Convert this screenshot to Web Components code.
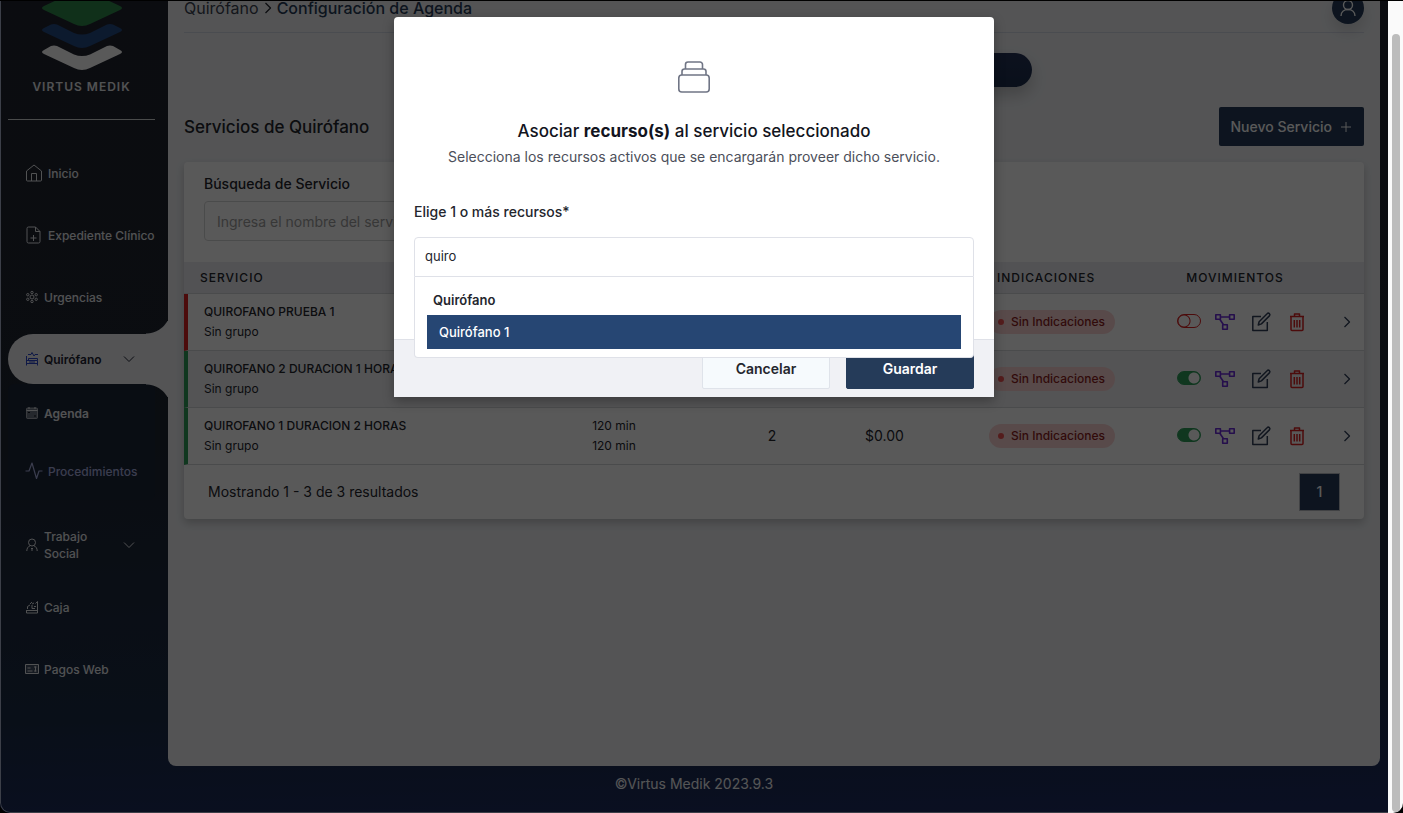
<!DOCTYPE html>
<html lang="es">
<head>
<meta charset="utf-8">
<meta name="viewport" content="width=device-width, initial-scale=1">
<title>Virtus Medik - Configuración de Agenda</title>
<style>
  html, body {
    margin: 0;
    height: 100%;
    background: #000;
  }

  body {
    font-family: Inter, "Liberation Sans", sans-serif;
    font-size: 14px;
    line-height: 20px;
    color: #24262d;
    overflow: hidden;
  }
</style>
</head>
<body>
<vm-window>
  <vm-page>
    <vm-sidebar slot="sidebar">
      <vm-nav-item icon="home" size="18">Inicio</vm-nav-item>
      <vm-nav-item icon="file" size="18">Expediente Clínico</vm-nav-item>
      <vm-nav-item icon="virus">Urgencias</vm-nav-item>
      <vm-nav-item icon="bed" active expandable>Quirófano</vm-nav-item>
      <vm-submenu>
        <vm-nav-item icon="calendar" sub strong>Agenda</vm-nav-item>
        <vm-nav-item icon="pulse" size="18" sub muted>Procedimientos</vm-nav-item>
      </vm-submenu>
      <vm-nav-item icon="person" expandable>Trabajo Social</vm-nav-item>
      <vm-nav-item icon="cash">Caja</vm-nav-item>
      <vm-nav-item icon="card" size="14">Pagos Web</vm-nav-item>
    </vm-sidebar>
    <vm-topbar section="Quirófano" current="Configuración de Agenda"></vm-topbar>
    <vm-tabs></vm-tabs>
    <vm-services></vm-services>
    <span slot="footer">©Virtus Medik 2023.9.3</span>
  </vm-page>
  <vm-modal slot="modal">
    <vm-icon slot="icon" name="archive" size="32"></vm-icon>
    <span slot="title">Asociar <b>recurso(s)</b> al servicio seleccionado</span>
    <span slot="subtitle">Selecciona los recursos activos que se encargarán proveer dicho servicio.</span>
    <vm-multiselect label="Elige 1 o más recursos*" value="quiro" group="Quirófano" option="Quirófano 1"></vm-multiselect>
  </vm-modal>
</vm-window>

<script>
  const ICONS = {
    home: { box: "0 0 18 18", w: 1, d: '<path d="M1.500 7 9 1l7.500 6v9a1 1 0 0 1-1 1h-13a1 1 0 0 1-1-1zM6.500 17v-7.500h5V17"/>' },
    file: { box: "0 0 18 18", w: 1, d: '<path d="M10.500 1H3.500a1.500 1.500 0 0 0-1.500 1.500v13A1.500 1.500 0 0 0 3.500 17h10a1.500 1.500 0 0 0 1.500-1.500V5.500zM10.500 1v4.500H15M8.500 9v6M5.500 12h6"/>' },
    virus: { box: "0 0 12 12", w: 1, d: '<circle cx="6" cy="6" r="2"/><circle cx="6" cy="1.500" r="1.200"/><circle cx="6" cy="10.500" r="1.200"/><circle cx="1.800" cy="3.700" r="1.200"/><circle cx="10.200" cy="3.700" r="1.200"/><circle cx="1.800" cy="8.300" r="1.200"/><circle cx="10.200" cy="8.300" r="1.200"/>' },
    bed: { box: "0 1 12 12", w: 1, d: '<path d="M2 2.500h3l1-2 2 3.500 1-1.500h3M.500 4v9.500M.500 8.500h11v5M.500 11.500h11M2.500 8.500v-2h9v2M3 10h6"/>' },
    calendar: { box: "0 0 12 12", w: 1, d: '<rect x=".5" y="1" width="11" height="10.500" rx="1" fill="currentColor" fill-opacity=".4" stroke-opacity=".6"/><path d="M3 0v2M9 0v2M.500 3.500h11"/><path d="M2 5.500h2M8 9h2" stroke="#10141f"/>' },
    pulse: { box: "0 0 18 18", w: 1.2, d: '<path d="M.500 9H4l3-8 4.500 15.500L14 9h3.500"/>' },
    person: { box: "0 1 12 12", w: 1, d: '<circle cx="6" cy="4.500" r="3.500"/><path d="M.800 13c0-2.500 1.200-4.500 3.200-5.200M11.200 13c0-2.500-1.200-4.500-3.200-5.200M6 10v3M5 10.500h2"/>' },
    cash: { box: "0 1 12 12", w: 1, d: '<path d="M.500 10v3h11V1.500l-2 2M.500 10.500h11M1.500 9V6.500L4 5M4 4l2-2M6 4l2-1M6 5v3.500h3M8 6.500h2"/>' },
    card: { box: "0 0 14 12", w: 1, d: '<rect x=".5" y="1.500" width="13" height="9" fill="currentColor" fill-opacity=".18"/><path d="M2.500 5h3M2.500 8h5M9 4h2.500M9 8h2.500M10.500 3.500v5"/>' },
    chevronDown: { box: "0 0 12 12", w: 1, d: '<path d="M1 3.500 6 8.500l5-5"/>' },
    chevronRight: { box: "0 0 12 12", w: 1.3, d: '<path d="M3.500 1 8.500 6l-5 5"/>' },
    user: { box: "0 0 18 18", w: 1.4, d: '<circle cx="9" cy="6" r="4.500"/><path d="M2 17c0-4 3-6.500 7-6.500s7 2.500 7 6.500"/>' },
    plus: { box: "0 0 12 12", w: 1, d: '<path d="M6 1v10M1 6h10"/>' },
    diagram: { box: "0 0 20 20", w: 1.6, d: '<rect x=".8" y="2.700" width="4.600" height="4.600"/><rect x="14.600" y="2.700" width="4.600" height="4.600"/><rect x="7.700" y="12.700" width="4.600" height="4.600"/><path d="M5.400 5h9.200M4.800 7.300l3.700 5.400"/>' },
    edit: { box: "0 0 20 20", w: 1.5, d: '<path d="M10 4.500H1.800v14h14.500V10"/><path d="m7.300 13 .8-3.300 8-8a1.500 1.500 0 0 1 2.300 2.200l-8 8z"/>' },
    trash: { box: "0 0 20 20", w: 1.5, d: '<path d="M3 4.500h14M7.500 4.500V2h5v2.500M4 4.500v13a1 1 0 0 0 1 1h10a1 1 0 0 0 1-1v-13M7.300 8v7.500M10 8v7.500M12.700 8v7.500"/>' },
    archive: { box: "0 0 32 32", w: 1.6, d: '<rect x=".8" y="14" width="30.400" height="17" rx="3"/><path d="M4 14v-3.500A2.500 2.500 0 0 1 6.500 8h19a2.500 2.500 0 0 1 2.500 2.500V14M7.500 8V3.500A2.500 2.500 0 0 1 10 1h12a2.500 2.500 0 0 1 2.500 2.500V8"/>' },
  }

  const SERVICES = [
    { name: "QUIROFANO PRUEBA 1", group: "Sin grupo", active: false },
    { name: "QUIROFANO 2 DURACION 1 HORA", group: "Sin grupo", active: true },
    { name: "QUIROFANO 1 DURACION 2 HORAS", group: "Sin grupo", min: "120 min", max: "120 min", resources: "2", cost: "$0.00", active: true },
  ]

  class VmIcon extends HTMLElement {
    constructor() {
      super()
      this.attachShadow({ mode: "open" })
    }

    connectedCallback() {
      const icon = ICONS[this.getAttribute("name")]
      const size = this.getAttribute("size") || 12
      this.shadowRoot.innerHTML = `
        <style>
          :host { display: inline-flex; flex: none; }
          svg { display: block; width: ${size}px; height: ${size}px; overflow: visible; }
        </style>
        <svg viewBox="${icon.box}" fill="none" stroke="currentColor" stroke-width="${icon.w}"
          stroke-linejoin="round" aria-hidden="true">${icon.d}</svg>
      `
    }
  }

  class VmWindow extends HTMLElement {
    constructor() {
      super()
      this.attachShadow({ mode: "open" })
      this.shadowRoot.innerHTML = `
        <style>
          :host {
            display: flex;
            height: 100vh;
            box-sizing: border-box;
            border-top: 1px solid #000;
          }

          .view {
            position: relative;
            flex: 1;
            min-width: 0;
            overflow: hidden;
            border-radius: 0 0 0 10px;
          }

          .edge {
            position: absolute;
            inset: 0;
            border: solid #3c3f48;
            border-width: 0 0 1px 1px;
            border-radius: 0 0 0 10px;
            pointer-events: none;
          }

          .track {
            width: 15px;
            box-sizing: border-box;
            padding: 33px 3px 1px 4px;
            background: #fafafa;
            display: flex;
            border-radius: 0 0 10px 0;
          }

          .thumb {
            flex: 1;
            border-radius: 4px;
            background: #bcbcbc;
          }
        </style>
        <div class="view">
          <slot></slot>
          <slot name="modal"></slot>
          <div class="edge"></div>
        </div>
        <div class="track"><div class="thumb"></div></div>
      `
    }
  }

  class VmPage extends HTMLElement {
    constructor() {
      super()
      this.attachShadow({ mode: "open" })
      this.shadowRoot.innerHTML = `
        <style>
          :host {
            display: grid;
            grid-template-columns: 168px minmax(0, 1fr);
            grid-template-rows: minmax(0, 1fr) 47px;
            height: calc(100% + 17px);
            margin-top: -17px;
            padding-right: 8px;
            box-sizing: border-box;
            background: linear-gradient(178deg, #22242f 0%, #1f2531 50%, #1c2c46 84%, #1d2b64 100%);
          }

          main {
            background: #eff1f4;
            border-radius: 0 0 8px 8px;
            padding: 0 16px;
          }

          footer {
            grid-column: 1 / -1;
            margin-right: -8px;
            padding-top: 8px;
            text-align: center;
            color: #f4f5f7;
          }
        </style>
        <slot name="sidebar"></slot>
        <main><slot></slot></main>
        <footer><slot name="footer"></slot></footer>
      `
    }
  }

  class VmSidebar extends HTMLElement {
    constructor() {
      super()
      this.attachShadow({ mode: "open" })
      this.shadowRoot.innerHTML = `
        <style>
          :host {
            display: block;
            color: #e8eaee;
          }

          .brand {
            display: flex;
            flex-direction: column;
            align-items: center;
            gap: 8px;
            margin: 0 13px 28px 8px;
            padding-bottom: 23px;
            border-bottom: 1px solid #d5d6d7;
            font-size: 12px;
            line-height: 18px;
            font-weight: 600;
            letter-spacing: 1px;
          }

          nav {
            display: flex;
            flex-direction: column;
            gap: 12px;
            padding-left: 8px;
          }
        </style>
        <div class="brand">
          <svg width="80" height="86" viewBox="0 0 80 86" aria-hidden="true">
            <path d="M2 22 32 8q8-4 16 0l30 14q4 2 0 4L48 40q-8 4-16 0L2 26q-4-2 0-4z" fill="#2f8a4c"/>
            <path d="M2 44 9 40.500q3-1 6 0L32 49q8 3 16 0l17-8.500q3-1 6 0L78 44q4 2 0 4L48 62q-8 4-16 0L2 48q-4-2 0-4z" fill="#244a85"/>
            <path d="M2 66 9 62q3-1 6 0L32 70.500q8 3 16 0L65 62q3-1 6 0L78 66q4 2 0 4L48 84q-8 4-16 0L2 70q-4-2 0-4z" fill="#fff"/>
          </svg>
          VIRTUS MEDIK
        </div>
        <nav><slot></slot></nav>
      `
    }
  }

  class VmNavItem extends HTMLElement {
    constructor() {
      super()
      this.attachShadow({ mode: "open" })
    }

    connectedCallback() {
      this.shadowRoot.innerHTML = `
        <style>
          :host { display: block; position: relative; }

          a {
            display: flex;
            align-items: center;
            gap: 6px;
            height: 50px;
            padding: 0 28px 0 18px;
            box-sizing: border-box;
            color: inherit;
            text-decoration: none;
            font-size: 12px;
            line-height: 17px;
            font-weight: 500;
          }

          .label { flex: 1; }
          .arrow { margin-right: 3px; }

          :host([size="18"]) a { gap: 5px; padding-left: 17px; padding-right: 0; white-space: nowrap; }
          :host([size="14"]) a { gap: 5px; padding-left: 17px; }
          :host([expandable]) a { padding-right: 30px; }
          :host([sub]) a { height: 58px; }
          :host([strong]) a { font-weight: 600; }
          :host([muted]) a { color: #a9b0e0; }

          :host([active]) a {
            background: #eff1f4;
            border-radius: 25px 0 0 25px;
            color: #1f2433;
            font-weight: 600;
          }

          :host([active]) .icon { color: #2b46c8; }

          /* inverted corners joining the active item to the content */
          :host([active])::before,
          :host([active])::after {
            content: "";
            position: absolute;
            right: 0;
            width: 22px;
            height: 13px;
          }

          :host([active])::before {
            bottom: 100%;
            background: radial-gradient(circle at 0 -12px, transparent 24px, #eff1f4 25px);
          }

          :host([active])::after {
            top: 100%;
            background: radial-gradient(circle at 0 25px, transparent 24px, #eff1f4 25px);
          }
        </style>
        <a href="#">
          <vm-icon class="icon" name="${this.getAttribute("icon")}" size="${this.getAttribute("size") || 12}"></vm-icon>
          <span class="label"><slot></slot></span>
          ${this.hasAttribute("expandable") ? '<vm-icon class="arrow" name="chevronDown"></vm-icon>' : ""}
        </a>
      `
    }
  }

  class VmSubmenu extends HTMLElement {
    constructor() {
      super()
      this.attachShadow({ mode: "open" })
      this.shadowRoot.innerHTML = `
        <style>
          :host {
            display: block;
            margin: -12px 13px 8px 0;
            background: #1a2538;
            border-radius: 6px;
          }
        </style>
        <slot></slot>
      `
    }
  }

  class VmTopbar extends HTMLElement {
    constructor() {
      super()
      this.attachShadow({ mode: "open" })
    }

    connectedCallback() {
      this.shadowRoot.innerHTML = `
        <style>
          :host {
            display: flex;
            align-items: center;
            justify-content: space-between;
            height: 48px;
            border-bottom: 1px solid #d5d9e6;
            font-size: 16px;
          }

          nav { display: flex; align-items: center; gap: 3px; }
          a { color: #3a4150; text-decoration: none; }
          strong { font-weight: 500; color: #253a57; }

          button {
            display: flex;
            align-items: center;
            justify-content: center;
            width: 32px;
            height: 32px;
            padding: 0;
            border: 0;
            border-radius: 50%;
            background: #253b59;
            color: #fff;
            box-shadow: 0 8px 14px rgba(0, 0, 0, .12);
          }
        </style>
        <nav aria-label="Ruta">
          <a href="#">${this.getAttribute("section")}</a>
          <vm-icon name="chevronRight"></vm-icon>
          <strong>${this.getAttribute("current")}</strong>
        </nav>
        <button type="button" aria-label="Cuenta"><vm-icon name="user" size="18"></vm-icon></button>
      `
    }
  }

  class VmTabs extends HTMLElement {
    constructor() {
      super()
      this.attachShadow({ mode: "open" })
      this.shadowRoot.innerHTML = `
        <style>
          :host {
            display: block;
            width: 516px;
            height: 34px;
            margin: 20px auto;
            border-radius: 17px;
            background: linear-gradient(#253357, #1d2e4d);
            box-shadow: 0 8px 16px rgba(0, 0, 0, .2);
          }
        </style>
      `
    }
  }

  class VmServices extends HTMLElement {
    constructor() {
      super()
      this.attachShadow({ mode: "open" })
    }

    connectedCallback() {
      this.shadowRoot.innerHTML = `
        <style>
          :host { display: block; }

          .heading {
            display: flex;
            align-items: center;
            justify-content: space-between;
            margin-bottom: 16px;
          }

          h1 { margin: 0; font-size: 17px; line-height: 28px; font-weight: 500; }

          .new {
            display: flex;
            align-items: center;
            gap: 8px;
            height: 39px;
            padding: 0 12px;
            border: 0;
            border-radius: 2px;
            background: #253b59;
            color: #fff;
            font: 500 14px/20px Inter, sans-serif;
          }

          .card {
            background: #fff;
            border-radius: 4px;
            box-shadow: 0 4px 8px rgba(0, 0, 0, .2);
          }

          .search { padding: 12px 20px 21px; }
          .search label { display: block; margin-bottom: 7px; font-weight: 500; }

          .search input {
            display: block;
            width: 50%;
            height: 40px;
            box-sizing: border-box;
            padding: 0 12px;
            border: 1px solid #d5d6d7;
            border-radius: 4px;
            background: #fff;
            font: 400 14px/20px Inter, sans-serif;
          }

          .search input::placeholder { color: #9e9e9e; }

          table {
            width: 100%;
            table-layout: fixed;
            border-collapse: separate;
            border-spacing: 0;
          }

          th, td { padding: 0; text-align: center; }

          th {
            height: 31px;
            border-bottom: 1px solid #d5d6da;
            background: #eaebef;
            font-size: 12px;
            line-height: 20px;
            font-weight: 500;
            letter-spacing: 1px;
          }

          th:first-child { padding-left: 16px; text-align: left; }
          th:nth-child(5) { padding-left: 24px; text-align: left; }

          td {
            height: 56px;
            border-bottom: 1px solid #d5d6da;
            font-size: 12px;
          }

          tr:nth-child(even) td { background: #f0f1f4; }

          td:first-child {
            padding-left: 16px;
            border-left: 4px solid #2f9e5b;
            text-align: left;
          }

          tr.off td:first-child { border-left-color: #d92020; }
          td:first-child b { display: block; font-weight: 500; }
          td:nth-child(3) { font-size: 14px; }
          td:nth-child(4) { padding-left: 16px; text-align: left; font-size: 14px; }
          td:nth-child(5) { padding-left: 16px; text-align: left; }
          td:last-child { padding-right: 11px; }

          .badge {
            display: inline-flex;
            align-items: center;
            gap: 7px;
            height: 24px;
            padding: 0 10px 0 9px;
            border-radius: 12px;
            background: #fbd5d5;
            color: #8f1d1d;
            font-weight: 500;
          }

          .badge::before {
            content: "";
            width: 6px;
            height: 6px;
            border-radius: 50%;
            background: #f05252;
          }

          .actions {
            display: flex;
            align-items: center;
            padding-left: 16px;
          }

          .actions input {
            appearance: none;
            width: 24px;
            height: 14px;
            margin: 0 14px 2px 0;
            box-sizing: border-box;
            border: 1px solid #d92020;
            border-radius: 7px;
            background: radial-gradient(circle at 6px 6px, transparent 5px, #d92020 6px, transparent 7px);
          }

          .actions input:checked {
            border-color: #2f9e5b;
            background: radial-gradient(circle at 16px 6px, #fff 5px, #2f9e5b 6px);
          }

          .actions button, td:last-child button {
            display: flex;
            padding: 0;
            border: 0;
            background: none;
            color: #33415a;
          }

          td:last-child button { margin-left: auto; }
          .actions button + button { margin-left: 16px; }
          .actions .flow { color: #6c2bd9; }
          .actions .remove { color: #d92020; }

          .summary {
            display: flex;
            align-items: center;
            justify-content: space-between;
            height: 54px;
            padding: 0 24px;
          }

          .summary button {
            width: 41px;
            height: 38px;
            padding: 0;
            border: 1px solid #b9bcc4;
            background: #253b59;
            color: #fff;
            font: 500 14px/20px Inter, sans-serif;
          }
        </style>
        <div class="heading">
          <h1>Servicios de Quirófano</h1>
          <button type="button" class="new">Nuevo Servicio <vm-icon name="plus"></vm-icon></button>
        </div>
        <section class="card">
          <div class="search">
            <label for="query">Búsqueda de Servicio</label>
            <input id="query" type="search" placeholder="Ingresa el nombre del servicio">
          </div>
          <table>
            <colgroup>
              <col><col style="width: 162px"><col style="width: 154px"><col style="width: 124px">
              <col style="width: 188px"><col style="width: 148px"><col style="width: 55px">
            </colgroup>
            <thead>
              <tr>
                <th>SERVICIO</th><th></th><th></th><th></th>
                <th>INDICACIONES</th><th>MOVIMIENTOS</th><th></th>
              </tr>
            </thead>
            <tbody>${SERVICES.map((s) => this.row(s)).join("")}</tbody>
          </table>
          <div class="summary">
            <span>Mostrando 1 - 3 de 3 resultados</span>
            <button type="button">1</button>
          </div>
        </section>
      `
    }

    row(service) {
      return `
        <tr class="${service.active ? "on" : "off"}">
          <td><b>${service.name}</b>${service.group}</td>
          <td>${service.min || ""}<br>${service.max || ""}</td>
          <td>${service.resources || ""}</td>
          <td>${service.cost || ""}</td>
          <td><span class="badge">Sin Indicaciones</span></td>
          <td>
            <div class="actions">
              <input type="checkbox" aria-label="Activo" ${service.active ? "checked" : ""}>
              <button type="button" class="flow" aria-label="Recursos"><vm-icon name="diagram" size="20"></vm-icon></button>
              <button type="button" aria-label="Editar"><vm-icon name="edit" size="20"></vm-icon></button>
              <button type="button" class="remove" aria-label="Eliminar"><vm-icon name="trash" size="20"></vm-icon></button>
            </div>
          </td>
          <td><button type="button" aria-label="Ver detalle"><vm-icon name="chevronRight"></vm-icon></button></td>
        </tr>
      `
    }
  }

  class VmModal extends HTMLElement {
    constructor() {
      super()
      this.attachShadow({ mode: "open" })
      this.shadowRoot.innerHTML = `
        <style>
          :host {
            position: absolute;
            inset: 0;
            display: flex;
            align-items: flex-start;
            justify-content: center;
            padding-top: 16px;
            background: rgba(0, 0, 0, .65);
          }

          .dialog {
            width: 600px;
            max-width: 100%;
            border-radius: 4px 4px 0 0;
            background: #fff;
            box-shadow: 0 4px 12px rgba(0, 0, 0, .3);
          }

          .body {
            display: flex;
            flex-direction: column;
            padding: 44px 20px 62px;
            text-align: center;
          }

          .icon { display: flex; justify-content: center; color: #707585; }
          h2 { margin: 24px 0 2px; font-size: 17px; line-height: 28px; font-weight: 500; color: #121420; }
          p { margin: 0 0 35px; color: #4c4f5a; }

          footer {
            display: flex;
            justify-content: flex-end;
            gap: 16px;
            padding: 9px 20px 8px;
            border-top: 1px solid #dfe1e8;
            background: #f0f1f5;
          }

          button {
            width: 128px;
            height: 40px;
            border: 1px solid #dfe3ea;
            border-radius: 2px;
            background: #f6fafd;
            color: #24262d;
            font: 600 14px/20px Inter, sans-serif;
          }

          button.primary { border-color: #253b59; background: #253b59; color: #fff; }
        </style>
        <div class="dialog" role="dialog" aria-modal="true" aria-labelledby="title">
          <div class="body">
            <div class="icon"><slot name="icon"></slot></div>
            <h2 id="title"><slot name="title"></slot></h2>
            <p><slot name="subtitle"></slot></p>
            <slot></slot>
          </div>
          <footer>
            <button type="button">Cancelar</button>
            <button type="button" class="primary">Guardar</button>
          </footer>
        </div>
      `
    }
  }

  class VmMultiselect extends HTMLElement {
    constructor() {
      super()
      this.attachShadow({ mode: "open" })
    }

    connectedCallback() {
      this.shadowRoot.innerHTML = `
        <style>
          :host { display: block; text-align: left; color: #24262d; }
          label { display: block; margin-bottom: 15px; font-weight: 500; }
          .field { position: relative; }

          input {
            display: block;
            width: 100%;
            height: 40px;
            box-sizing: border-box;
            padding: 0 10px 3px;
            border: 1px solid #dfe1e8;
            border-radius: 4px 4px 0 0;
            outline: 0;
            background: #fff;
            color: inherit;
            font: 400 13px/20px Inter, sans-serif;
          }

          .list {
            position: absolute;
            top: 100%;
            left: 0;
            right: 0;
            padding: 13px 12px 8px;
            border: 1px solid #dfe1e8;
            border-top: 0;
            border-radius: 0 0 4px 4px;
            background: #fff;
            font-size: 13px;
          }

          .group { padding: 0 6px 5px; font-weight: 600; }

          .option {
            padding: 7px 12px;
            background: #264673;
            color: #fff;
            font-weight: 500;
          }
        </style>
        <label for="search">${this.getAttribute("label")}</label>
        <div class="field">
          <input id="search" type="text" value="${this.getAttribute("value")}">
          <div class="list" role="listbox" aria-label="Recursos">
            <div class="group" role="presentation">${this.getAttribute("group")}</div>
            <div class="option" role="option" aria-selected="true">${this.getAttribute("option")}</div>
          </div>
        </div>
      `
    }
  }

  customElements.define("vm-icon", VmIcon)
  customElements.define("vm-window", VmWindow)
  customElements.define("vm-page", VmPage)
  customElements.define("vm-sidebar", VmSidebar)
  customElements.define("vm-nav-item", VmNavItem)
  customElements.define("vm-submenu", VmSubmenu)
  customElements.define("vm-topbar", VmTopbar)
  customElements.define("vm-tabs", VmTabs)
  customElements.define("vm-services", VmServices)
  customElements.define("vm-modal", VmModal)
  customElements.define("vm-multiselect", VmMultiselect)
</script>
</body>
</html>
